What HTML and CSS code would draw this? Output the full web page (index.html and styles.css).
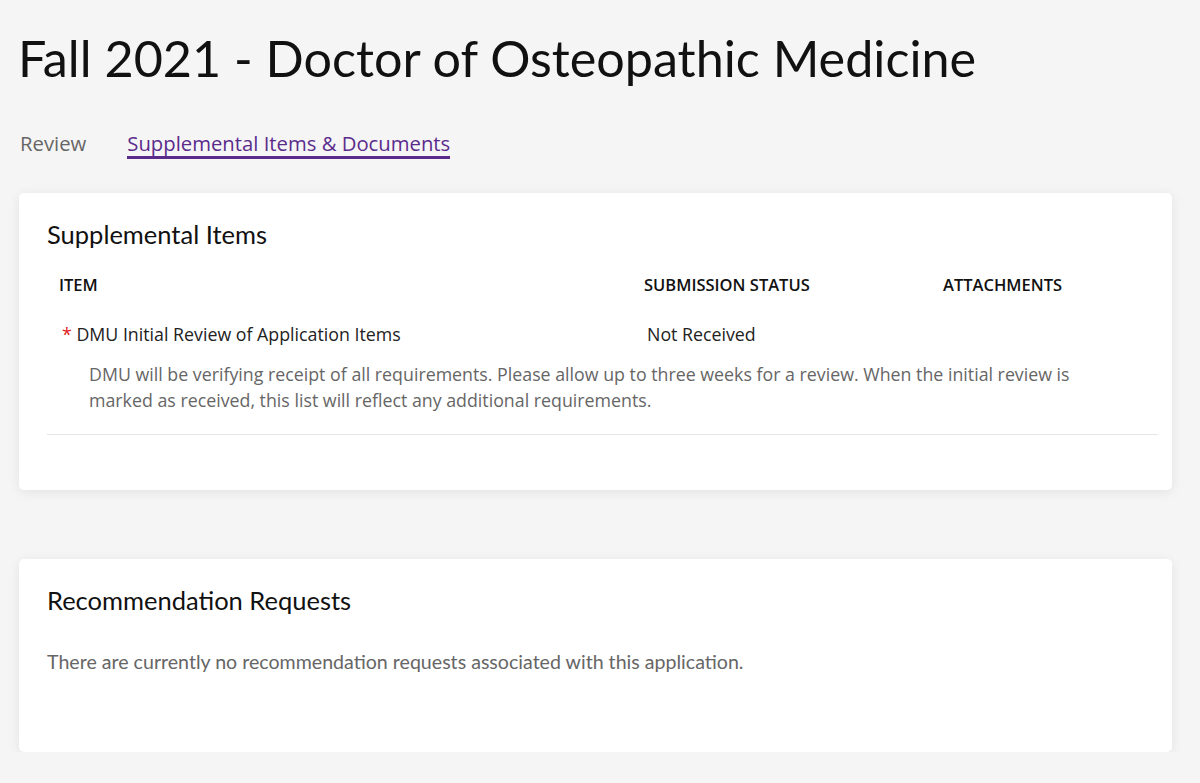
FILE: index.html
```html
<!DOCTYPE html>
<html>
<head>
<meta charset="utf-8">
<link rel="stylesheet" href="styles.css">
</head>
<body>
<div class="page">
  <h1 class="title">Fall 2021 - Doctor of Osteopathic Medicine</h1>
  <nav class="tabs">
    <span class="tab">Review</span>
    <span class="tab active">Supplemental Items &amp; Documents</span>
  </nav>
  <section class="card card-items">
    <h2 class="card-title">Supplemental Items</h2>
    <div class="table">
      <div class="row head">
        <div class="col-item">ITEM</div>
        <div class="col-status">SUBMISSION STATUS</div>
        <div class="col-attach">ATTACHMENTS</div>
      </div>
      <div class="row item">
        <div class="col-item"><span class="req">*</span> DMU Initial Review of Application Items</div>
        <div class="col-status status">Not Received</div>
        <div class="col-attach"></div>
      </div>
      <p class="desc">DMU will be verifying receipt of all requirements. Please allow up to three weeks for a review. When the initial review is marked as received, this list will reflect any additional requirements.</p>
    </div>
  </section>
  <section class="card card-recs">
    <h2 class="card-title">Recommendation Requests</h2>
    <p class="empty">There are currently no recommendation requests associated with this application.</p>
  </section>
</div>
</body>
</html>
```
FILE: styles.css
```css
html, body {
  margin: 0;
  padding: 0;
  background: #f5f5f5;
}
.page {
  padding: 24px 28px 0 19px;
  font-family: "Open Sans", "Liberation Sans", sans-serif;
}
.title {
  margin: 0 0 0 -1px;
  font-family: Lato, "Noto Sans", sans-serif;
  font-weight: 400;
  font-size: 50.3px;
  line-height: 68px;
  color: #111;
}
.tabs {
  display: flex;
  gap: 41px;
  margin: 38px 0 0 1px;
}
.tab {
  font-size: 20.3px;
  line-height: 26px;
  color: #666;
  border-bottom: 3px solid transparent;
}
.tab.active {
  color: #5b2b8c;
  border-bottom-color: #5b2b8c;
}
.card {
  background: #fff;
  border-radius: 5px;
  box-shadow: 0 2px 12px rgba(0,0,0,0.08);
}
.card-items {
  margin-top: 34px;
  height: 297px;
  padding: 24px 14px 0 28px;
  box-sizing: border-box;
}
.card-title {
  margin: 0;
  font-family: Lato, "Noto Sans", sans-serif;
  font-weight: 400;
  font-size: 25.5px;
  line-height: 34px;
  color: #111;
}
.table {
  margin-top: 24px;
  border-bottom: 1px solid #e6e6e6;
  padding-bottom: 21px;
}
.row {
  display: flex;
}
.col-item { width: 597px; padding-left: 12px; box-sizing: border-box; flex: none; }
.col-status { width: 299px; box-sizing: border-box; flex: none; }
.col-attach { flex: 1; }
.head {
  font-size: 16.5px;
  font-weight: 600;
  color: #111;
  line-height: 20px;
}
.item {
  margin-top: 26px;
  font-size: 17.8px;
  line-height: 26px;
  color: #222;
}
.item .col-item { padding-left: 15px; }
.status { padding-left: 3px; }
.req { color: #e02020; }
.desc {
  margin: 14px 0 0 42px;
  font-size: 17.8px;
  line-height: 26px;
  color: #666;
  max-width: 1010px;
}
.card-recs {
  margin-top: 69px;
  height: 193px;
  padding: 24px 28px 0 28px;
  box-sizing: border-box;
}
.empty {
  margin: 32px 0 0 0;
  font-family: Lato, "Noto Sans", sans-serif;
  font-size: 19.6px;
  line-height: 26px;
  color: #666;
}
```
